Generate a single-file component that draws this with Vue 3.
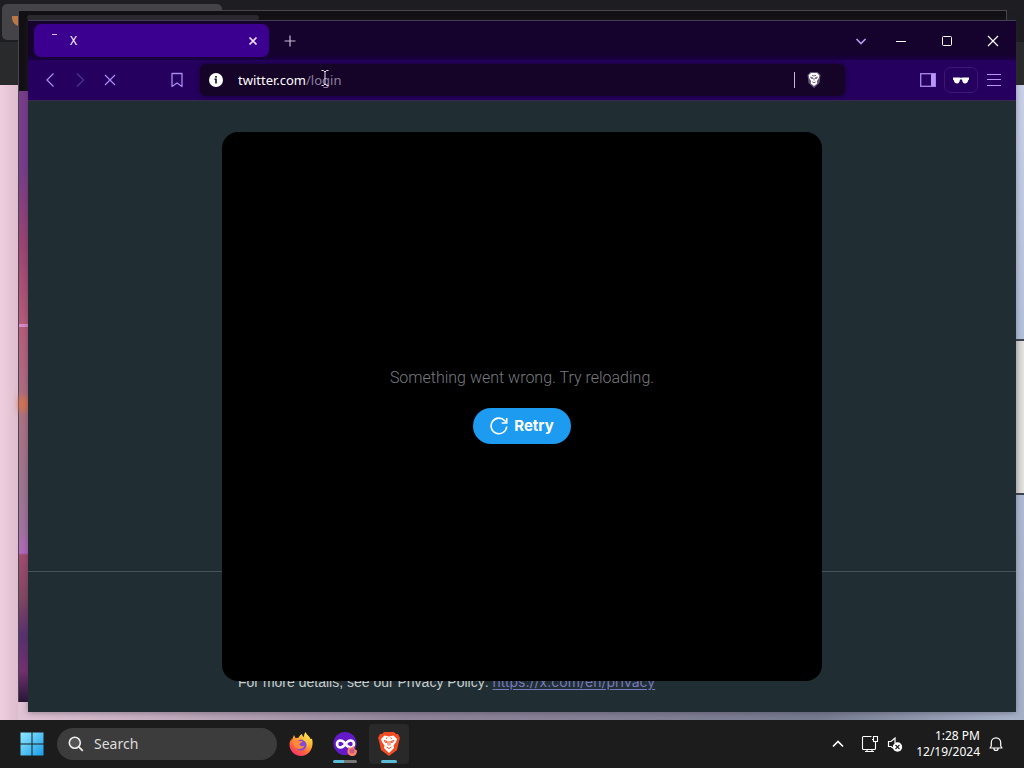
<script setup>
import { ref } from 'vue'

const address = ref('twitter.com/login')
const query = ref('')
</script>

<template>
  <div class="desktop">
    <main class="stage">
      <section class="rear-window" aria-hidden="true">
        <div class="rear-bar"><div class="rear-tab"><i></i></div></div>
        <div class="rear-body"><div class="side-panel"><i></i></div></div>
      </section>

      <section class="middle-window" aria-hidden="true">
        <div class="middle-bar"><div class="middle-tab"></div></div>
        <div class="middle-body"><i class="streak"></i><i class="glow"></i></div>
      </section>

      <section class="browser">
        <header class="tab-strip">
          <div class="tab">
            <i class="spinner"></i>
            <span class="tab-title">X</span>
            <button class="icon-button tab-close" aria-label="Close tab">
              <svg width="10" height="10" viewBox="0 0 10 10"><path d="M1.5 1.5l7 7m0-7l-7 7" stroke="#eee2ff" stroke-width="1.7" /></svg>
            </button>
          </div>
          <button class="icon-button new-tab" aria-label="New tab">
            <svg width="12" height="12" viewBox="0 0 12 12"><path d="M6 .5v11M.5 6h11" stroke="#c5bad4" stroke-width="1.2" /></svg>
          </button>
          <div class="window-controls">
            <button class="icon-button" aria-label="Search tabs">
              <svg width="12" height="12" viewBox="0 0 12 12"><path d="M1.500 4L6 8.500l4.500-4.500" stroke="#b49cf0" stroke-width="1.700" fill="none" /></svg>
            </button>
            <button class="icon-button" aria-label="Minimize">
              <svg width="12" height="12" viewBox="0 0 12 12"><path d="M1 6.500h10" stroke="#fff" /></svg>
            </button>
            <button class="icon-button" aria-label="Maximize">
              <svg width="12" height="12" viewBox="0 0 12 12"><rect x="1.500" y="1.500" width="9" height="9" rx="1" stroke="#fff" fill="none" /></svg>
            </button>
            <button class="icon-button" aria-label="Close">
              <svg width="12" height="12" viewBox="0 0 12 12"><path d="M1 1l10 10M11 1L1 11" stroke="#fff" stroke-width="1.200" /></svg>
            </button>
          </div>
        </header>

        <nav class="toolbar">
          <button class="icon-button nav" aria-label="Back">
            <svg width="16" height="16" viewBox="0 0 16 16"><path d="M11.500 1.500L5 8l6.500 6.500" stroke="#a98af0" stroke-width="1.300" fill="none" /></svg>
          </button>
          <button class="icon-button nav" aria-label="Forward" disabled>
            <svg width="16" height="16" viewBox="0 0 16 16"><path d="M5 1.500L11.500 8 5 14.500" stroke="#51309a" stroke-width="1.300" fill="none" /></svg>
          </button>
          <button class="icon-button nav" aria-label="Stop">
            <svg width="16" height="16" viewBox="0 0 16 16"><path d="M3 3l10 10M13 3L3 13" stroke="#a98af0" stroke-width="1.300" /></svg>
          </button>
          <button class="icon-button nav bookmark" aria-label="Bookmark">
            <svg width="16" height="16" viewBox="0 0 16 16"><path d="M3 1.500h10v13l-5-3.500-5 3.500z" stroke="#a98af0" stroke-width="1.300" stroke-linejoin="round" fill="none" /></svg>
          </button>
          <div class="address">
            <svg width="14" height="14" viewBox="0 0 14 14"><circle cx="7" cy="7" r="7" fill="#fff" /><path d="M7 3v1.800M5.500 6.300H7v4.200" stroke="#180438" stroke-width="1.600" fill="none" /></svg>
            <div class="address-text">
              <input v-model="address" aria-label="Address" spellcheck="false">
              <div class="address-display" aria-hidden="true">twitter.com<span>/login</span></div>
              <svg class="caret" width="8" height="16" viewBox="0 0 8 16"><path d="M.5 .5h2L4 2 5.500.5h2M4 2v12M.5 15.500h2L4 14l1.500 1.500h2" stroke="#e8e2ee" fill="none" /></svg>
            </div>
            <i class="divider"></i>
            <button class="icon-button" aria-label="Shields">
              <svg width="20" height="20" viewBox="0 0 20 20">
                <path d="M6.500 2h7l3 3-1 8-5.500 5L4.500 13l-1-8z" fill="#65587d" />
                <path d="M7 3h6l2.300 2.300-.4 2.600-2 3.200.3 2.300L10 16l-3.200-2.600.3-2.300-2-3.200-.4-2.600z" fill="#fff" />
                <path d="M6.500 7l2.200.7-.6 1.300zM13.500 7l-2.200.7.6 1.300zM8 5.300l2 .7 2-.7M10 8v2.500M8.300 11.800l1.700 1 1.700-1" stroke="#504061" stroke-width=".8" fill="none" />
              </svg>
            </button>
          </div>
          <div class="tools">
            <button class="icon-button panel-toggle" aria-label="Sidebar">
              <svg width="16" height="14" viewBox="0 0 16 14"><rect x=".7" y=".7" width="14.600" height="12.600" stroke="#a98af0" stroke-width="1.300" fill="none" /><path d="M11 1h4v12h-4z" fill="#b795fa" /></svg>
            </button>
            <button class="icon-button private" aria-label="Private window">
              <svg width="16" height="7" viewBox="0 0 16 7"><path d="M0 .5h6.500q1.500.6 3 0H16v2l-.8.700Q14.500 6.500 11.900 6.500 9.500 6.500 9 2.500H7Q6.500 6.500 4.100 6.500 1.500 6.500.8 3.200L0 2.500z" fill="#fff" /></svg>
            </button>
            <button class="icon-button" aria-label="Menu">
              <svg width="16" height="14" viewBox="0 0 16 14"><path d="M1 1.500h14M1 6.500h14M1 12.500h14" stroke="#b795fa" stroke-width="1.200" /></svg>
            </button>
          </div>
        </nav>

        <article class="page">
          <footer class="privacy">
            <p>For more details, see our Privacy Policy: <a href="https://x.com/en/privacy">https://x.com/en/privacy</a></p>
          </footer>
          <div class="dialog" role="alertdialog" aria-labelledby="dialog-message">
            <p id="dialog-message">Something went wrong. Try reloading.</p>
            <button class="retry">
              <svg width="18" height="18" viewBox="0 0 18 18"><path d="M16.700 9.500A7.800 7.800 0 1 1 14.800 3.800L16.500 5.500M16.700 1v5h-5" stroke="#fff" stroke-width="1.600" fill="none" /></svg>
              Retry
            </button>
          </div>
        </article>
      </section>
    </main>

    <footer class="taskbar">
      <button class="icon-button start" aria-label="Start">
        <svg width="24" height="24" viewBox="0 0 24 24">
          <defs><linearGradient id="tiles" x2="1" y2="1"><stop stop-color="#91e9ff" /><stop offset="1" stop-color="#199ce8" /></linearGradient></defs>
          <path d="M.5.5h11v11H.5zm12 0h11v11h-11zM.5 12.500h11v11H.5zm12 0h11v11h-11z" fill="url(#tiles)" />
        </svg>
      </button>
      <label class="search">
        <svg width="16" height="16" viewBox="0 0 16 16"><circle cx="6.800" cy="6.800" r="5.500" stroke="#eee" stroke-width="1.600" fill="#555" /><path d="M10.800 10.800l4 4" stroke="#eee" stroke-width="1.800" /></svg>
        <input v-model="query" type="text" placeholder="Search" aria-label="Search">
      </label>
      <div class="apps">
        <button class="app" aria-label="Firefox">
          <svg width="24" height="24" viewBox="0 0 24 24">
            <defs>
              <linearGradient id="flame" x1=".85" y1="0" x2=".25" y2="1"><stop stop-color="#fff35a" /><stop offset=".4" stop-color="#ffad31" /><stop offset=".7" stop-color="#ff643d" /><stop offset="1" stop-color="#f32d70" /></linearGradient>
            </defs>
            <path d="M5 3l1.500 3 3-.3c1-2 2.300-3 3.500-3.700.2 1.500 1 2.500 2 3 0-2 .3-3.500 1.500-5 1.200 3 4 4 5 7l1.500-.3C25.500 15.500 20 24 12 24 4.500 24-.5 17.500.7 10.500L2.500 6v3z" fill="url(#flame)" />
            <circle cx="12" cy="13" r="5.500" fill="#8549d7" />
            <path d="M4 8.500c3-2 5-.8 6.500.5l3 .3c0 1.700-2.500 1.600-3 2.700-.3 2 2.500 3 5 1.500-1.500 4.500-8 4.500-10 1C4.300 12.500 4.500 10 4 8.500z" fill="#ff8b38" />
            <path d="M15 5c4.500 2 5.500 7.500 3.500 10.500 0-4-1.500-6-4.500-7.500z" fill="#ffc83b" />
          </svg>
        </button>
        <button class="app running" aria-label="Private browsing">
          <svg width="26" height="26" viewBox="0 0 26 26">
            <circle cx="13" cy="12.500" r="11.500" fill="#651ac8" />
            <path d="M13.500 13C11.500 10 10 9.500 8.500 9.500a3.500 3.500 0 0 0 0 7c1.500 0 3-.5 5-3.500s3.500-3.500 5-3.500a3.500 3.500 0 0 1 0 7c-1.500 0-3-.5-5-3.500z" fill="none" stroke="#fff" stroke-width="2.600" />
            <path d="M16 16l2 1 4-2 .5 3 2.500 1.500c0 4-2.500 6-5.500 5.500-3.500-.5-5-4-3.500-7z" fill="#ff8066" />
            <circle cx="20" cy="20" r="2.500" fill="#c35a86" />
          </svg>
          <i class="indicator split"></i>
        </button>
        <button class="app active" aria-label="Brave">
          <svg width="22" height="26" viewBox="0 0 22 26">
            <path d="M6 1h10l2 2h2l2 4-1 3-2 9-8 6-8-6L1 10 0 7l2-4h2z" fill="#f34c23" />
            <path d="M6.500 4.500L11 5.500l4.500-1L19 8l-1 3-2.500 3.500.5 2.500-5 5-5-5 .5-2.500L4 11 3 8z" fill="#fff" />
            <path d="M6 9.500l3 .8-.8 1.700zM16 9.500l-3 .8.8 1.700zM9 6.500l-.5 1.500M13 6.500l.5 1.500M10 10v4.500M12 10v4.500M8.500 16l2.500 1.500 2.500-1.500" fill="none" stroke="#f34c23" stroke-width="1" />
          </svg>
          <i class="indicator"></i>
        </button>
      </div>
      <div class="tray">
        <button class="icon-button" aria-label="Show hidden icons">
          <svg width="12" height="12" viewBox="0 0 12 12"><path d="M1 8.500l5-5 5 5" stroke="#fff" stroke-width="1.700" fill="none" /></svg>
        </button>
        <button class="status" aria-label="Network and volume">
          <svg width="18" height="18" viewBox="0 0 18 18"><path d="M10.500 1.500h-8q-1 0-1 1v11q0 1 1 1h11q1 0 1-1V9M6 14.500v2m5-2v2M4 16.500h9M12.500 1.500h4v5h-4zM14.500 6.500v4M11 4.500h1.500" stroke="#fff" stroke-width="1.100" fill="none" /></svg>
          <svg width="16" height="16" viewBox="0 0 16 16"><path d="M8 7V2L4 5.500H1.500v5H4L6 12" stroke="#fff" stroke-width="1.200" fill="none" /><circle cx="10.500" cy="11" r="4.700" fill="#fff" /><path d="M8.500 9l4 4m0-4l-4 4" stroke="#222" stroke-width="1.100" /></svg>
        </button>
        <button class="clock"><span>1:28 PM</span><span>12/19/2024</span></button>
        <button class="icon-button" aria-label="Notifications">
          <svg width="16" height="16" viewBox="0 0 16 16"><path d="M2 12l1.300-2V6.500a4.700 4.700 0 0 1 9.400 0V10L14 12zM6 12.500a2 2 0 0 0 4 0" stroke="#fff" stroke-width="1.200" fill="none" stroke-linejoin="round" /></svg>
        </button>
      </div>
    </footer>
  </div>
</template>

<style>
html, body { margin: 0; }
</style>

<style scoped>
* { box-sizing: border-box; }
button, input { font: inherit; }
button { border: 0; padding: 0; background: none; color: inherit; }
svg { display: block; flex-shrink: 0; }
p { margin: 0; }
.desktop { min-height: 100vh; display: flex; flex-direction: column; font-family: "Noto Sans", "Open Sans", sans-serif; color: #fff; }
.stage { flex: 1; position: relative; overflow: hidden; background: linear-gradient(90deg, #e5c7d7, #91859b 40%, #777c91 80%, #aab5cc); }
.icon-button { display: grid; place-items: center; flex-shrink: 0; }

.rear-window { position: absolute; inset: 0; display: flex; flex-direction: column; background: linear-gradient(90deg, #e5c7d7, #91859b 40%, #777c91 80%, #aab5cc); }
.rear-bar { height: 85px; background: linear-gradient(#1d1d22 0 42px, #292a2c 42px); padding: 4px 2px; }
.rear-tab { width: 220px; height: 36px; border-radius: 5px; background: #444448; padding: 12px 10px; }
.rear-tab i { display: block; width: 8px; height: 10px; background: #b87848; border-radius: 0 0 0 8px; }
.rear-body { flex: 1; background: linear-gradient(90deg, #f0cedf 0, #dcbdcd 18px, transparent 18px); display: flex; justify-content: flex-end; }
.side-panel { width: 10px; display: flex; flex-direction: column; justify-content: center; background: linear-gradient(#c8d0e7, #b3c0d9 40%, #a5b0c7); }
.side-panel i { height: 156px; margin-top: 28px; background: linear-gradient(90deg, #c9c9c7, #e3e3df); border: solid #3b424b; border-width: 2px 0; }

.middle-window { position: absolute; inset: 10px 17px 18px 18px; border: 1px solid #48464d; border-bottom: 0; display: flex; flex-direction: column; background: #121014; }
.middle-bar { height: 80px; padding: 4px 8px; }
.middle-tab { width: 232px; height: 5px; background: #2b292e; border-radius: 3px; }
.middle-body { flex: 1; width: 10px; background: linear-gradient(#783d8b 0, #783d8b 80px, #9a4472 150px, #b65b7a 230px, #ad7183 320px, #9d7590 400px, #a372a0 440px, #b269bd 462px, #a34b70 464px, #844862 505px, #593070 545px, #753172 580px, #281638); }
.streak { display: block; height: 3px; margin-top: 233px; background: #dc8ac9; }
.glow { display: block; height: 14px; margin-top: 70px; background: #d7744b; filter: blur(3px); }

.browser { position: absolute; inset: 20px 8px 8px 28px; display: flex; flex-direction: column; border-top: 1px solid #414054; background: #202d33; overflow: hidden; box-shadow: 0 1px 6px #342b3b66; }
.tab-strip { height: 39px; flex-shrink: 0; display: flex; align-items: center; padding: 0 0 0 6px; background: linear-gradient(#15022d 0 33px, #1a0045); }
.tab { width: 235px; height: 33px; display: flex; align-items: center; border-radius: 7px; background: #3c0090; padding: 0 11px 0 18px; gap: 13px; }
.spinner { width: 5px; height: 1px; margin-bottom: 12px; background: #d9bcff; }
.tab-title { flex: 1; font-size: 12px; line-height: 16px; }
.new-tab { width: 42px; height: 32px; }
.window-controls { display: flex; margin-left: auto; }
.window-controls button { width: 46px; height: 38px; }
.window-controls button:first-child { width: 34px; }
.toolbar { height: 41px; flex-shrink: 0; display: flex; align-items: center; padding: 0 6px 0 5px; background: #25005f; border-bottom: 1px solid #3b294f; }
.nav { width: 30px; height: 32px; }
.nav:first-child { margin-left: 2px; }
.bookmark { margin-left: 37px; }
.address { flex: 1; height: 32px; margin-left: 8px; padding: 0 21px 0 9px; display: flex; align-items: center; border-radius: 6px; background: #150328; box-shadow: 0 0 5px #170333; }
.address-text { flex: 1; height: 24px; margin-left: 15px; position: relative; font-size: 13px; line-height: 24px; }
.address-text input { width: 100%; height: 24px; padding: 0; border: 0; outline: 0; color: transparent; background: transparent; }
.address-display { position: absolute; inset: 0; pointer-events: none; }
.address-display span { color: #8c809d; }
.caret { position: absolute; left: 83px; top: 2px; }
.divider { width: 1px; height: 16px; background: #c5b8d6; margin-right: 9px; }
.tools { display: flex; align-items: center; margin-left: 75px; padding-right: 8px; gap: 8px; }
.private { width: 34px; height: 26px; border: 1px solid #3b1778; border-radius: 7px; }

.page { flex: 1; min-height: 549px; position: relative; display: flex; flex-direction: column; justify-content: flex-end; background: #202d33; }
.privacy { min-height: 141px; border-top: 1px solid #465158; display: flex; justify-content: center; align-items: flex-end; padding: 0 16px 20px; font: 14px/20px "Liberation Sans", sans-serif; color: #c6cccb; }
.privacy p { width: 568px; }
.privacy a { font-family: Inter, sans-serif; color: #777abd; text-underline-offset: 2px; }
.dialog { position: absolute; inset: 31px 0; width: 600px; max-width: 90%; margin: 0 auto; padding-bottom: 2px; display: flex; flex-direction: column; align-items: center; justify-content: center; gap: 20px; border-radius: 16px; background: #000; font: 16px/20px Roboto, sans-serif; font-weight: 300; color: #777b7f; }
.retry { height: 36px; padding: 0 17px; display: flex; align-items: center; gap: 6px; border-radius: 18px; background: #1d9bf0; color: #fff; font-family: Inter, sans-serif; font-size: 15px; font-weight: 700; }

.taskbar { height: 48px; flex-shrink: 0; display: flex; align-items: center; padding: 0 20px; background: #1c1c1c; }
.search { width: 220px; height: 32px; margin-left: 13px; padding: 0 11px; display: flex; align-items: center; gap: 10px; border-radius: 16px; background: #3c3c3c; }
.search input { width: 100%; min-width: 0; padding: 0; border: 0; outline: 0; background: transparent; color: #ddd; font-size: 14px; line-height: 20px; }
.search input::placeholder { color: #ddd; opacity: 1; }
.apps { display: flex; margin-left: 4px; gap: 4px; }
.app { width: 40px; height: 40px; position: relative; display: grid; place-items: center; border-radius: 4px; }
.active { background: #292929; }
.indicator { position: absolute; bottom: 1px; left: 12px; width: 16px; height: 3px; border-radius: 2px; background: #59bdd8; }
.split { left: 8px; width: 24px; background: linear-gradient(90deg, #59bdd8 0 11px, #777 11px); }
.tray { margin-left: auto; display: flex; align-items: center; }
.status { display: flex; align-items: center; gap: 8px; margin-left: 17px; }
.clock { display: flex; flex-direction: column; align-items: flex-end; margin: 0 8px 0 13px; font-size: 12px; line-height: 16px; }
</style>
